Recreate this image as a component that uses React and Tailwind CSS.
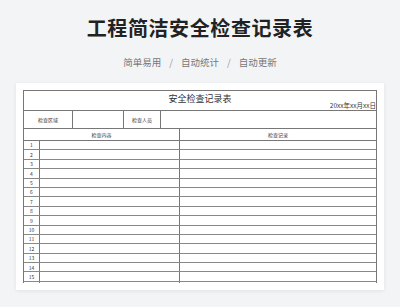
import React from "react";

const font = { fontFamily: '"Noto Sans CJK SC", "Noto Sans", sans-serif' };

export default function App() {
  const rows = Array.from({ length: 16 }, (_, i) => i + 1);
  return (
    <div className="w-[400px] h-[307px] bg-[#f3f4f6] overflow-hidden flex flex-col items-center" style={font}>
      <div className="mt-[15px] text-[20px] leading-[26px] font-bold text-[#222] tracking-[0.6px]">工程简洁安全检查记录表</div>
      <div className="mt-[14px] flex items-center gap-[8px] text-[9.5px] leading-[14px] text-[#777]">
        <span>简单易用</span>
        <span className="text-[#999]">/</span>
        <span>自动统计</span>
        <span className="text-[#999]">/</span>
        <span>自动更新</span>
      </div>
      <div className="mt-[14px] w-[368px] h-[207px] bg-white shadow-[0_1px_4px_rgba(0,0,0,0.08)] pt-[7px] px-[7px]">
        <div className="h-[193px] overflow-hidden border-x border-t border-[#777] text-[#333]">
          <div className="h-[20px] border-b border-[#777] relative">
            <div className="text-center text-[9px] leading-[12px] pt-[2px]">安全检查记录表</div>
            <div className="absolute right-[0px] bottom-[1px] text-[6.5px] leading-[8px]">20xx年xx月xx日</div>
          </div>
          <div className="h-[18px] border-b border-[#777] flex text-[5px]">
            <div className="w-[49px] border-r border-[#777] flex items-center justify-center">检查区域</div>
            <div className="w-[51px] border-r border-[#777]"></div>
            <div className="w-[37px] border-r border-[#777] flex items-center justify-center">检查人员</div>
            <div className="flex-1"></div>
          </div>
          <div className="h-[12px] border-b border-[#777] flex text-[5px]">
            <div className="w-[156px] border-r border-[#777] flex items-center justify-center">检查内容</div>
            <div className="flex-1 flex items-center justify-center">检查记录</div>
          </div>
          {rows.map((n) => (
            <div key={n} className="h-[9.4px] border-b border-[#888] flex text-[5px]">
              <div className="w-[16px] border-r border-[#777] flex items-center justify-center">{n}</div>
              <div className="w-[140px] border-r border-[#777]"></div>
              <div className="flex-1"></div>
            </div>
          ))}
        </div>
      </div>
    </div>
  );
}
